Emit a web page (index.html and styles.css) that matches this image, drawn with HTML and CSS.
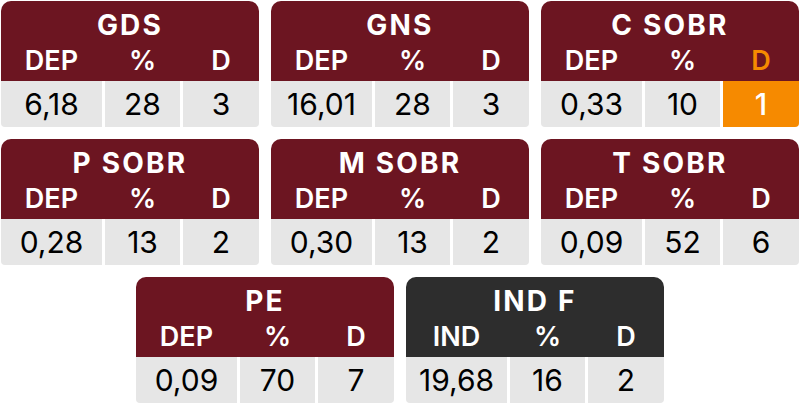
FILE: index.html
```html
<!DOCTYPE html>
<html>
<head>
<meta charset="utf-8">
<link rel="stylesheet" href="styles.css">
</head>
<body>
<div class="board">
  <div class="row">
    <div class="card">
      <div class="head">
        <div class="title">GDS</div>
        <div class="cols"><span>DEP</span><span>%</span><span>D</span></div>
      </div>
      <div class="vals"><span>6,18</span><span>28</span><span>3</span></div>
    </div>
    <div class="card">
      <div class="head">
        <div class="title">GNS</div>
        <div class="cols"><span>DEP</span><span>%</span><span>D</span></div>
      </div>
      <div class="vals"><span>16,01</span><span>28</span><span>3</span></div>
    </div>
    <div class="card">
      <div class="head">
        <div class="title">C SOBR</div>
        <div class="cols"><span>DEP</span><span>%</span><span class="hl-text">D</span></div>
      </div>
      <div class="vals"><span>0,33</span><span>10</span><span class="hl-cell">1</span></div>
    </div>
  </div>
  <div class="row">
    <div class="card">
      <div class="head">
        <div class="title">P SOBR</div>
        <div class="cols"><span>DEP</span><span>%</span><span>D</span></div>
      </div>
      <div class="vals"><span>0,28</span><span>13</span><span>2</span></div>
    </div>
    <div class="card">
      <div class="head">
        <div class="title">M SOBR</div>
        <div class="cols"><span>DEP</span><span>%</span><span>D</span></div>
      </div>
      <div class="vals"><span>0,30</span><span>13</span><span>2</span></div>
    </div>
    <div class="card">
      <div class="head">
        <div class="title">T SOBR</div>
        <div class="cols"><span>DEP</span><span>%</span><span>D</span></div>
      </div>
      <div class="vals"><span>0,09</span><span>52</span><span>6</span></div>
    </div>
  </div>
  <div class="row">
    <div class="card">
      <div class="head">
        <div class="title">PE</div>
        <div class="cols"><span>DEP</span><span>%</span><span>D</span></div>
      </div>
      <div class="vals"><span>0,09</span><span>70</span><span>7</span></div>
    </div>
    <div class="card">
      <div class="head dark">
        <div class="title">IND F</div>
        <div class="cols"><span>IND</span><span>%</span><span>D</span></div>
      </div>
      <div class="vals"><span>19,68</span><span>16</span><span>2</span></div>
    </div>
  </div>
</div>
</body>
</html>
```
FILE: styles.css
```css
* { box-sizing: border-box; }
html, body { margin: 0; padding: 0; background: #ffffff; }
body { padding: 1px 1px 0 1px; font-family: Inter, "Liberation Sans", sans-serif; }
.board { display: flex; flex-direction: column; gap: 12px; width: 798px; }
.row { display: flex; justify-content: center; gap: 12px; }
.card { width: 258px; height: 126px; display: flex; flex-direction: column; }
.head {
  height: 80px;
  background: #6c1521;
  color: #ffffff;
  border-radius: 10px 10px 0 0;
  display: flex;
  flex-direction: column;
}
.head.dark { background: #2d2d2d; }
.title {
  height: 40px;
  padding-top: 6px;
  text-align: center;
  font-size: 28px;
  font-weight: 700;
  letter-spacing: 2.2px;
  line-height: 36px;
}
.cols, .vals {
  display: grid;
  grid-template-columns: 101fr 75fr 76fr;
  column-gap: 3px;
}
.cols { height: 40px; padding-top: 2px; font-size: 27px; font-weight: 600; line-height: 36px; }
.cols span, .vals span { text-align: center; }
.hl-text { color: #f68a00; }
.vals {
  flex: 1;
  font-size: 30px;
  font-weight: 400;
  color: #000000;
}
.vals span {
  background: #e6e6e6;
  line-height: 46px;
}
.vals span:first-child { border-radius: 0 0 0 4px; }
.vals span:last-child { border-radius: 0 0 4px 0; }
.vals .hl-cell { background: #f68a00; color: #ffffff; font-weight: 500; }
```
